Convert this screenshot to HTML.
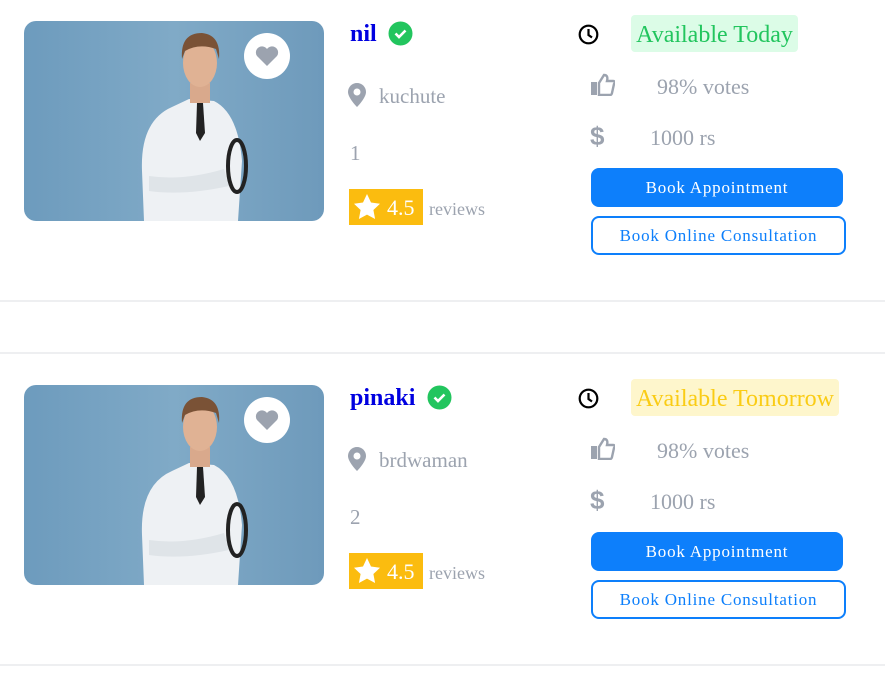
<!DOCTYPE html><html><head><style>
body{margin:0;width:885px;height:677px;background:#fff;font-family:"Liberation Serif",serif;position:relative;overflow:hidden}
.a{position:absolute}
.g{color:#9ca3af}
.btn{position:absolute;left:591px;width:252px;height:39px;border-radius:8px;background:#0d7ffb;color:#fff;font-size:17px;letter-spacing:.8px;text-align:center;line-height:40px}
.btn2{position:absolute;left:591px;width:251px;height:35px;border-radius:8px;border:2px solid #0d7ffb;color:#0d7ffb;font-size:17px;letter-spacing:.8px;text-align:center;line-height:36px}
.hr{position:absolute;left:0;width:885px;height:2px;background:#eeeff1}
</style></head><body>
<div class="hr" style="top:300px"></div><div class="hr" style="top:352px"></div><div class="hr" style="top:664px"></div>
<div id="c1" class="a" style="left:0;top:0;width:885px;height:300px">
<svg class="a" style="left:24px;top:21px" width="300" height="200"><defs><linearGradient id="bg" x1="0" x2="1"><stop offset="0" stop-color="#6d9bbd"/><stop offset=".5" stop-color="#80aac7"/><stop offset="1" stop-color="#6e9abb"/></linearGradient></defs><rect width="300" height="200" rx="12" fill="url(#bg)"/>
<path d="M120 200 L118 150 Q116 100 148 86 L165 78 L190 80 Q214 92 218 140 L214 200Z" fill="#eef1f4"/>
<rect x="166" y="62" width="20" height="20" fill="#d9a98c"/>
<ellipse cx="176" cy="42" rx="17" ry="24" fill="#e0b294"/>
<path d="M158 38 Q156 12 178 12 Q197 14 195 38 L192 28 Q175 22 161 30Z" fill="#7a5236"/>
<path d="M173 82 L179 82 L181 112 L176 120 L172 112Z" fill="#222"/>
<path d="M125 155 Q160 160 200 148 L205 165 Q160 175 125 170Z" fill="#dfe4e8"/>
<ellipse cx="213" cy="145" rx="9" ry="26" fill="none" stroke="#222" stroke-width="4"/>
<circle cx="243" cy="35" r="23" fill="#fff"/><path d="M243 45 L233 35 A5.5 5.5 0 0 1 243 28 A5.5 5.5 0 0 1 253 35Z" fill="#9ca3af"/></svg>
<div class="a" style="left:350px;top:21px;font-size:24px;font-weight:bold;color:#0000e0">nil</div>
<svg class="a" style="left:388px;top:21px" width="25" height="25"><circle cx="12.5" cy="12.5" r="12" fill="#22c55e"/><path d="M7.5 12.5l3.5 3.5 6.5-6.5" stroke="#fff" stroke-width="2.6" fill="none"/></svg>
<svg class="a" style="left:348px;top:83px" width="18" height="24"><path d="M9 0C4 0 0 4 0 9c0 6 9 15 9 15s9-9 9-15c0-5-4-9-9-9z" fill="#9ca3af"/><circle cx="9" cy="9" r="3.5" fill="#fff"/></svg>
<div class="a g" style="left:379px;top:84px;font-size:21px">kuchute</div>
<div class="a g" style="left:350px;top:141px;font-size:21px">1</div>
<div class="a" style="left:349px;top:189px;width:74px;height:36px;background:#fbbc0f"></div>
<svg class="a" style="left:353px;top:193px" width="28" height="27"><path d="M14 1l4 8.5 9 1.2-6.6 6.3 1.7 9L14 21.6 5.9 26l1.7-9L1 10.7l9-1.2z" fill="#fff"/></svg>
<div class="a" style="left:387px;top:195px;font-size:22px;color:#fff">4.5</div>
<div class="a g" style="left:429px;top:199px;font-size:18px">reviews</div>
<svg class="a" style="left:578px;top:24px" width="21" height="21"><circle cx="10.5" cy="10.5" r="8.8" fill="none" stroke="#000" stroke-width="2.2"/><path d="M10.5 5v6l3.5 2.5" stroke="#000" stroke-width="2.2" fill="none"/></svg>
<div class="a bd" style="left:631px;top:15px;width:167px;height:37px;border-radius:4px;background:#dcfce7;color:#22c55e;font-size:24px;text-align:center;line-height:40px">Available Today</div>
<svg class="a" style="left:591px;top:73px" width="24" height="23"><rect x="0" y="9" width="6" height="13" fill="#9ca3af"/><path d="M8 10l5-8c3 0 4 2 3 6h6c2 0 2 2 1 3l-2 9c0 1-1 2-2 2H8z" fill="none" stroke="#9ca3af" stroke-width="2.4"/></svg>
<div class="a g" style="left:657px;top:74px;font-size:22px">98% votes</div>
<div class="a g" style="left:590px;top:121px;font-size:26px;font-family:'Liberation Sans',sans-serif;font-weight:bold">$</div>
<div class="a g" style="left:650px;top:125px;font-size:22px">1000 rs</div>
<div class="btn" style="top:168px">Book Appointment</div>
<div class="btn2" style="top:216px">Book Online Consultation</div>
</div>
<div id="c2"></div>
<script>
var c=document.getElementById('c1').cloneNode(true);c.style.top='364px';
c.querySelector('svg').querySelector('linearGradient').id='bg2';c.querySelector('svg rect').setAttribute('fill','url(#bg2)');
var d=c.querySelectorAll('div');d[0].textContent='pinaki';d[1].textContent='brdwaman';d[2].textContent='2';
c.querySelectorAll('svg')[1].style.left='427px';
var b=c.querySelector('.bd');b.textContent='Available Tomorrow';b.style.background='#fef6cc';b.style.color='#facc15';b.style.width='208px';
document.getElementById('c2').replaceWith(c);
</script>
</body></html>
